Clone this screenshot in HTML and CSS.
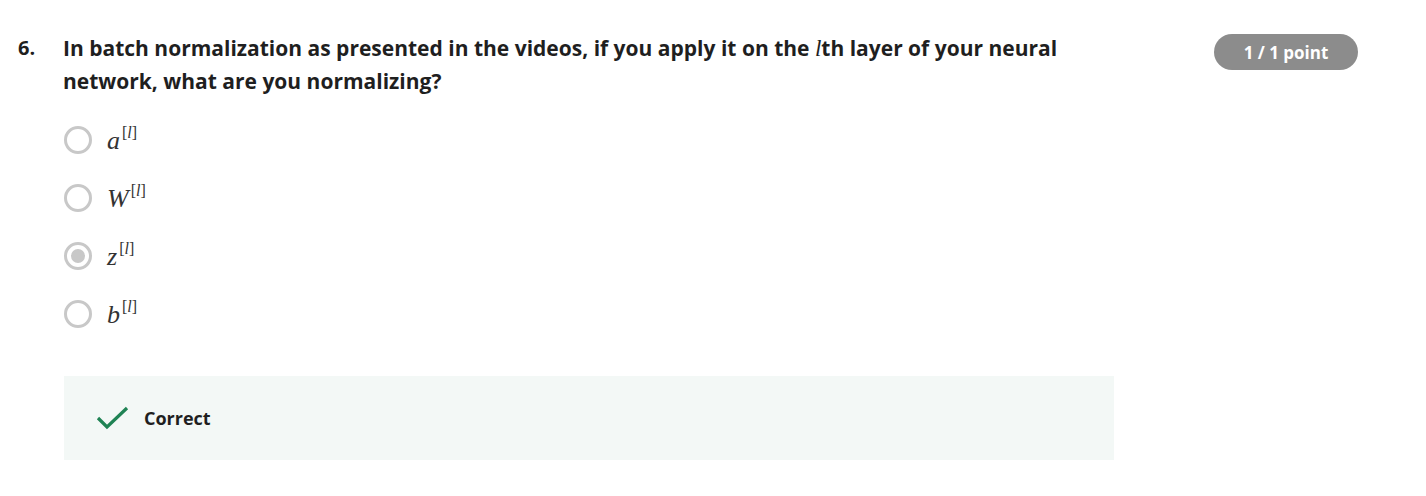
FILE: index.html
```html
<!DOCTYPE html>
<html>
<head>
<meta charset="utf-8">
<link rel="stylesheet" href="styles.css">
</head>
<body>
<div class="question">
  <div class="qhead">
    <div class="qnum">6.</div>
    <div class="qtext">In batch normalization as presented in the videos, if you apply it on the <span class="mi">l</span>th layer of your neural network, what are you normalizing?</div>
    <div class="badge">1 / 1 point</div>
  </div>
  <div class="options">
    <div class="opt"><span class="radio"></span><span class="math"><span class="mi">a</span><sup class="sup">[<span class="mi">l</span>]</sup></span></div>
    <div class="opt"><span class="radio"></span><span class="math"><span class="mi">W</span><sup class="sup">[<span class="mi">l</span>]</sup></span></div>
    <div class="opt"><span class="radio checked"></span><span class="math"><span class="mi">z</span><sup class="sup">[<span class="mi">l</span>]</sup></span></div>
    <div class="opt"><span class="radio"></span><span class="math"><span class="mi">b</span><sup class="sup">[<span class="mi">l</span>]</sup></span></div>
  </div>
  <div class="feedback">
    <svg class="check" width="34" height="26" viewBox="0 0 34 26"><path d="M2 13 L11 22 L31 3" fill="none" stroke="#1f8354" stroke-width="3.2"/></svg>
    <span class="ftext">Correct</span>
  </div>
</div>
</body>
</html>
```
FILE: styles.css
```css
html, body { margin: 0; padding: 0; background: #fff; }
body { font-family: "Open Sans", "Liberation Sans", sans-serif; color: #1f1f1f; }
.question { padding: 32px 68px 0 18px; }
.qhead { display: flex; align-items: flex-start; }
.qnum { width: 45px; font-weight: 700; font-size: 20px; line-height: 32px; flex: none; }
.qtext { width: 1010px; font-weight: 700; font-size: 21px; line-height: 32px; flex: none; }
.qtext .mi { font-family: "Liberation Serif", "DejaVu Serif", serif; font-weight: 400; font-style: italic; font-size: 23px; }
.badge { margin-left: auto; margin-top: 2px; width: 144px; height: 36px; border-radius: 18px; background: #8c8c8c; color: #fff; font-weight: 700; font-size: 17px; display: flex; align-items: center; justify-content: center; }
.options { margin-top: 29px; padding-left: 46px; display: flex; flex-direction: column; gap: 30px; }
.opt { display: flex; align-items: center; height: 28px; }
.radio { width: 22px; height: 22px; border: 3px solid #c8c8c8; border-radius: 50%; box-sizing: content-box; flex: none; display: flex; align-items: center; justify-content: center; }
.radio.checked::after { content: ""; width: 14px; height: 14px; border-radius: 50%; background: #c8c8c8; }
.math { margin-left: 15px; font-family: "Liberation Serif", "DejaVu Serif", serif; font-size: 26px; color: #333; line-height: 28px; position: relative; top: 2px; }
.math .mi { font-style: italic; }
.sup { font-size: 16px; vertical-align: 0; position: relative; top: -11px; margin-left: 2px; }
.feedback { margin-top: 48px; margin-left: 46px; width: 1050px; height: 84px; background: #f3f8f6; display: flex; align-items: center; padding-left: 32px; box-sizing: border-box; }
.check { flex: none; }
.ftext { margin-left: 14px; font-weight: 700; font-size: 18px; color: #1f1f1f; }
```
